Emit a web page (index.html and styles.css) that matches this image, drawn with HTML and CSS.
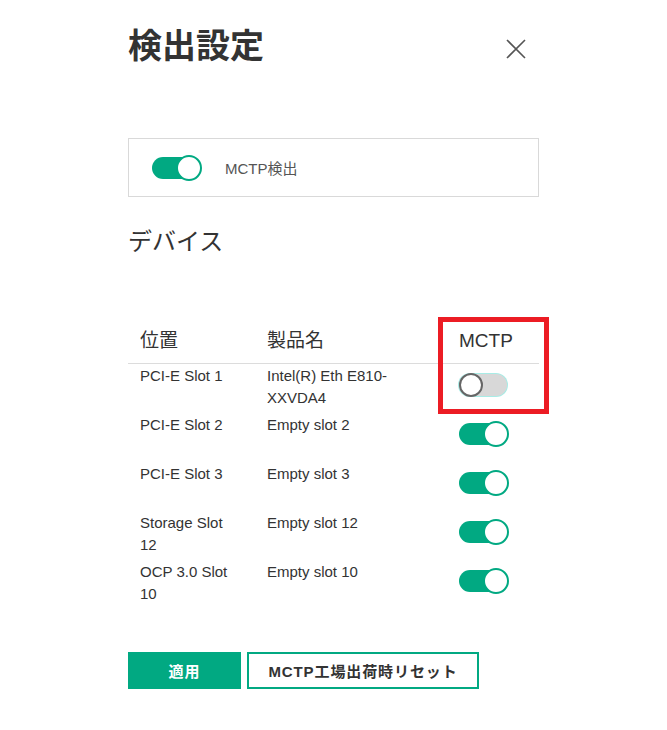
FILE: index.html
```html
<!DOCTYPE html>
<html lang="ja">
<head>
<meta charset="utf-8">
<title>検出設定</title>
<link rel="stylesheet" href="styles.css">
</head>
<body>
<div class="panel">
  <div class="head">
    <h1 class="title">検出設定</h1>
    <button class="close" aria-label="閉じる">
      <svg width="20" height="20" viewBox="0 0 20 20"><path d="M1 1 L19 19 M19 1 L1 19" stroke="#555" stroke-width="1.6" fill="none"/></svg>
    </button>
  </div>

  <div class="detect-box">
    <span class="toggle on"><span class="knob"></span></span>
    <span class="detect-label">MCTP検出</span>
  </div>

  <h2 class="section">デバイス</h2>

  <div class="table-wrap">
    <table class="devices">
      <thead>
        <tr>
          <th class="c1">位置</th>
          <th class="c2">製品名</th>
          <th class="c3">MCTP</th>
        </tr>
      </thead>
      <tbody>
        <tr>
          <td class="c1">PCI-E Slot 1</td>
          <td class="c2">Intel(R) Eth E810-XXVDA4</td>
          <td class="c3"><span class="toggle off"><span class="knob"></span></span></td>
        </tr>
        <tr>
          <td class="c1">PCI-E Slot 2</td>
          <td class="c2">Empty slot 2</td>
          <td class="c3"><span class="toggle on"><span class="knob"></span></span></td>
        </tr>
        <tr>
          <td class="c1">PCI-E Slot 3</td>
          <td class="c2">Empty slot 3</td>
          <td class="c3"><span class="toggle on"><span class="knob"></span></span></td>
        </tr>
        <tr>
          <td class="c1">Storage Slot 12</td>
          <td class="c2">Empty slot 12</td>
          <td class="c3"><span class="toggle on"><span class="knob"></span></span></td>
        </tr>
        <tr>
          <td class="c1">OCP 3.0 Slot 10</td>
          <td class="c2">Empty slot 10</td>
          <td class="c3"><span class="toggle on"><span class="knob"></span></span></td>
        </tr>
      </tbody>
    </table>
    <div class="highlight"></div>
  </div>

  <div class="actions">
    <button class="btn primary">適用</button>
    <button class="btn secondary">MCTP工場出荷時リセット</button>
  </div>
</div>
</body>
</html>
```

FILE: styles.css
```css
html, body {
  margin: 0;
  padding: 0;
  background: #fff;
}

body {
  font-family: "Liberation Sans", Arial, "Noto Sans CJK JP", sans-serif;
  color: #333;
}

.panel {
  width: 411px;
  margin-left: 128px;
  padding-top: 22px;
}

.head {
  display: flex;
  justify-content: space-between;
  align-items: flex-start;
}

.title {
  margin: 0;
  font-family: "Noto Sans CJK JP", sans-serif;
  font-size: 34px;
  line-height: 44px;
  font-weight: 700;
  color: #333;
}

.close {
  border: 0;
  background: none;
  padding: 0;
  margin: 17px 13px 0 0;
  width: 20px;
  height: 20px;
  display: block;
}

.close svg {
  display: block;
}

.detect-box {
  margin-top: 72px;
  height: 57px;
  border: 1px solid #d9d9d9;
  display: flex;
  align-items: center;
  padding-left: 23px;
}

.detect-label {
  margin-left: 25px;
  font-size: 15px;
  color: #555;
}

.toggle {
  width: 48px;
  height: 22px;
  border-radius: 11px;
  background: #01a982;
  display: flex;
  align-items: center;
  justify-content: flex-end;
  flex: none;
  box-sizing: border-box;
}

.toggle .knob {
  width: 22px;
  height: 22px;
  border-radius: 50%;
  border: 2px solid #01a982;
  background: #fff;
  flex: none;
  margin-right: -2px;
}

.toggle.off {
  background: #d8d8d8;
  box-shadow: 0 0 0 1px #a8ece6;
  justify-content: flex-start;
}

.toggle.off .knob {
  border-color: #666;
  margin: 0;
  width: 20px;
  height: 20px;
}

.section {
  margin: 27px 0 0 0;
  font-size: 24px;
  line-height: 32px;
  font-weight: 400;
  color: #333;
  font-family: "Noto Sans CJK JP", sans-serif;
}

.table-wrap {
  position: relative;
  margin-top: 73px;
}

.devices {
  width: 411px;
  border-collapse: collapse;
  table-layout: fixed;
}

.devices th,
.devices td {
  box-sizing: border-box;
}

.devices th {
  text-align: left;
  font-weight: 400;
  font-size: 19px;
  line-height: 24px;
  padding: 0 0 10px 12px;
  border-bottom: 1px solid #dcdcdc;
  color: #333;
}

.devices td {
  vertical-align: top;
  font-size: 15px;
  line-height: 22px;
  padding: 1px 0 0 12px;
  color: #333;
}

.devices .c1 { width: 127px; padding-right: 18px; }
.devices .c2 { width: 192px; padding-right: 12px; }
.devices .c3 { width: 92px; }

.devices td.c3 {
  height: 49px;
  padding-top: 10px;
}

.highlight {
  position: absolute;
  left: 310px;
  top: -12px;
  width: 101px;
  height: 87px;
  border: 5px solid #ec1c24;
  pointer-events: none;
}

.actions {
  display: flex;
  gap: 6px;
  margin-top: 43px;
}

.btn {
  height: 37px;
  box-sizing: border-box;
  font-family: "Liberation Sans", Arial, "Noto Sans CJK JP", sans-serif;
  font-size: 15px;
  font-weight: 700;
  letter-spacing: 0.9px;
  cursor: pointer;
  padding: 0;
}

.btn.primary {
  width: 113px;
  background: #01a982;
  color: #fff;
  border: 0;
}

.btn.secondary {
  width: 232px;
  background: #fff;
  color: #333;
  border: 2px solid #01a982;
}
```
